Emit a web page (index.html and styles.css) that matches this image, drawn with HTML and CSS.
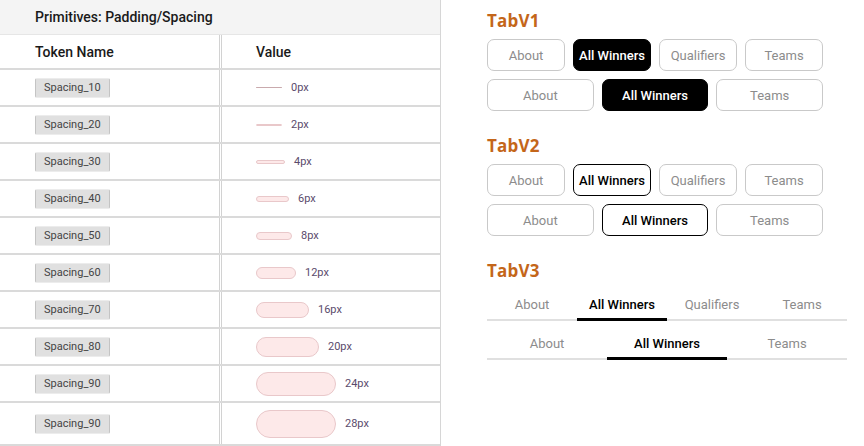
FILE: index.html
```html
<!DOCTYPE html>
<html>
<head>
<meta charset="utf-8">
<link rel="stylesheet" href="styles.css">
</head>
<body>
<div class="page">
  <div class="table">
    <div class="title-row">Primitives: Padding/Spacing</div>
    <div class="row head">
      <div class="cell c1">Token Name</div>
      <div class="cell c2">Value</div>
    </div>
    <div class="row"><div class="cell c1"><span class="chip">Spacing_10</span></div><div class="cell c2"><span class="bar line" style="width:26px;height:1px"></span><span class="val">0px</span></div></div>
    <div class="row"><div class="cell c1"><span class="chip">Spacing_20</span></div><div class="cell c2"><span class="bar" style="width:26px;height:2px"></span><span class="val">2px</span></div></div>
    <div class="row"><div class="cell c1"><span class="chip">Spacing_30</span></div><div class="cell c2"><span class="bar" style="width:29px;height:4px"></span><span class="val">4px</span></div></div>
    <div class="row"><div class="cell c1"><span class="chip">Spacing_40</span></div><div class="cell c2"><span class="bar" style="width:33px;height:6px"></span><span class="val">6px</span></div></div>
    <div class="row"><div class="cell c1"><span class="chip">Spacing_50</span></div><div class="cell c2"><span class="bar" style="width:36px;height:8px"></span><span class="val">8px</span></div></div>
    <div class="row"><div class="cell c1"><span class="chip">Spacing_60</span></div><div class="cell c2"><span class="bar" style="width:40px;height:12px"></span><span class="val">12px</span></div></div>
    <div class="row"><div class="cell c1"><span class="chip">Spacing_70</span></div><div class="cell c2"><span class="bar" style="width:53px;height:16px"></span><span class="val">16px</span></div></div>
    <div class="row"><div class="cell c1"><span class="chip">Spacing_80</span></div><div class="cell c2"><span class="bar" style="width:63px;height:20px"></span><span class="val">20px</span></div></div>
    <div class="row"><div class="cell c1"><span class="chip">Spacing_90</span></div><div class="cell c2"><span class="bar" style="width:80px;height:24px"></span><span class="val">24px</span></div></div>
    <div class="row last"><div class="cell c1"><span class="chip">Spacing_90</span></div><div class="cell c2"><span class="bar" style="width:80px;height:28px"></span><span class="val">28px</span></div></div>
  </div>

  <div class="tabs-col">
    <h2 class="sec-title first">TabV1</h2>
    <div class="btn-row">
      <span class="btn">About</span>
      <span class="btn solid">All Winners</span>
      <span class="btn">Qualifiers</span>
      <span class="btn">Teams</span>
    </div>
    <div class="btn-row">
      <span class="btn">About</span>
      <span class="btn solid">All Winners</span>
      <span class="btn">Teams</span>
    </div>

    <h2 class="sec-title">TabV2</h2>
    <div class="btn-row">
      <span class="btn">About</span>
      <span class="btn outline">All Winners</span>
      <span class="btn">Qualifiers</span>
      <span class="btn">Teams</span>
    </div>
    <div class="btn-row">
      <span class="btn">About</span>
      <span class="btn outline">All Winners</span>
      <span class="btn">Teams</span>
    </div>

    <h2 class="sec-title">TabV3</h2>
    <div class="line-tabs four">
      <span class="ltab">About</span>
      <span class="ltab active">All Winners</span>
      <span class="ltab">Qualifiers</span>
      <span class="ltab">Teams</span>
    </div>
    <div class="line-tabs three">
      <span class="ltab">About</span>
      <span class="ltab active">All Winners</span>
      <span class="ltab">Teams</span>
    </div>
  </div>
</div>
</body>
</html>
```

FILE: styles.css
```css
* { box-sizing: border-box; }
html, body { margin: 0; padding: 0; background: #fff; }
body { font-family: Roboto, "Liberation Sans", Arial, sans-serif; color: #111; }

.page { display: flex; align-items: flex-start; }

/* ---------- table ---------- */
.table {
  width: 441px;
  border-right: 1px solid #d6d6d6;
  flex: none;
}
.title-row {
  height: 35px;
  background: #f4f4f4;
  border-bottom: 1px solid #e6e6e6;
  padding-left: 35px;
  font-size: 14px;
  font-weight: 500;
  line-height: 34px;
  color: #1a1a1a;
}
.row {
  display: flex;
  border-bottom: 2px solid #dadada;
}
.cell {
  min-height: 35px;
  padding-top: 5.5px;
  padding-bottom: 5.5px;
  display: flex;
  align-items: center;
}
.last .cell { padding-top: 6.5px; padding-bottom: 6.5px; }
.c1 {
  width: 220px;
  padding-left: 35px;
  border-right: 1px solid #d2d2d2;
}
.c2 {
  flex: 1;
  padding-left: 34px;
  border-left: 1px solid #d2d2d2;
  margin-left: 1px;
}
.head .cell { min-height: 33px; padding-top: 0; padding-bottom: 0; }
.head {
  font-size: 14px;
  font-weight: 500;
  color: #1a1a1a;
}

.chip {
  display: inline-block;
  height: 20px;
  line-height: 18px;
  padding: 0 8px;
  font-size: 11px;
  color: #444;
  background: #e0e0e0;
  border: 1px solid #ececec;
  border-left-color: #c4c4c4;
  border-right-color: #c4c4c4;
  border-radius: 2px;
}

.bar {
  display: inline-block;
  background: #fde9e9;
  border: 1px solid #e9c8ca;
  border-radius: 20px;
  flex: none;
}
.bar.line { border: none; background: #c9aaad; }
.val {
  margin-left: 9px;
  font-size: 11px;
  color: #5a4b6c;
}

/* ---------- tabs ---------- */
.tabs-col {
  margin-left: 46px;
  width: 360px;
  flex: none;
}
.sec-title {
  margin: 24px 0 7px;
  height: 22px;
  font-family: "Open Sans", "Liberation Sans", sans-serif;
  font-weight: 700;
  font-size: 17px;
  line-height: 22px;
  letter-spacing: 0.2px;
  color: #c4661a;
}
.sec-title.first { margin-top: 10px; }

.btn-row {
  display: flex;
  gap: 8px;
  width: 336px;
  margin-bottom: 8px;
}
.btn-row:last-of-type { margin-bottom: 0; }
.btn {
  flex: 1;
  height: 32px;
  border: 1px solid #c9c9c9;
  border-radius: 7px;
  display: flex;
  align-items: center;
  justify-content: center;
  font-size: 13px;
  color: #8c8c8c;
}
.btn.solid {
  background: #000;
  border-color: #000;
  color: #fff;
  font-weight: 500;
}
.btn.outline {
  border-color: #000;
  color: #000;
  font-weight: 500;
}

.line-tabs {
  display: flex;
  width: 360px;
}
.sec-title + .line-tabs { margin-top: -7px; }
.ltab {
  flex: 1;
  text-align: center;
  font-size: 13px;
  line-height: 16px;
  color: #8c8c8c;
  padding: 15px 0 6px;
  border-bottom: 2px solid #e0e0e0;
}
.ltab.active {
  color: #000;
  font-weight: 500;
  padding-bottom: 5px;
  border-bottom: 3px solid #000;
}
```
